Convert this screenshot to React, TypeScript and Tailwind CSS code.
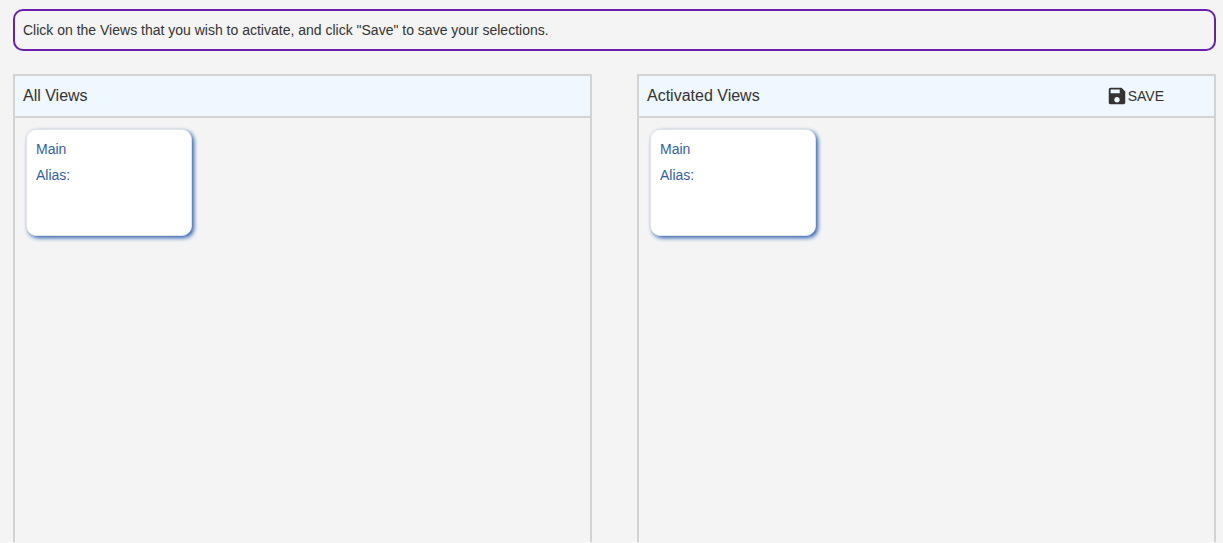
import type { ReactNode } from 'react';
import { MdSave } from 'react-icons/md';

type View = { name: string; alias: string };

const views: View[] = [{ name: 'Main', alias: '' }];

function ViewCard({ view }: { view: View }) {
  return (
    <button
      type="button"
      className="flex h-[107px] w-[166px] flex-col items-start rounded-[10px] border border-[#e0e4ea] bg-white px-[9px] pt-[6px] text-left text-[14px] leading-[26px] text-[#3560a0] shadow-[2px_2px_4px_#2f62b0]"
    >
      <span>{view.name}</span>
      <span>Alias: {view.alias}</span>
    </button>
  );
}

function Panel({ title, action }: { title: string; action?: ReactNode }) {
  return (
    <section className="flex flex-1 flex-col border-2 border-b-0 border-[#d3d3d3]">
      <header className="flex h-[42px] items-center justify-between border-b-2 border-[#d3d3d3] bg-[#f0f8ff] pr-[50px] pl-2">
        <h2 className="text-base">{title}</h2>
        {action}
      </header>
      <div className="flex flex-wrap gap-4 p-[11px]">
        {views.map((view) => (
          <ViewCard key={view.name} view={view} />
        ))}
      </div>
    </section>
  );
}

export default function App() {
  return (
    <main className="flex min-h-screen flex-col bg-[#f4f4f4] pt-[9px] pr-[7px] pb-px pl-[13px] font-['Liberation_Sans',Arial,sans-serif] text-[#333333]">
      <p className="rounded-[10px] border-2 border-[#6a1fb0] px-2 py-[9px] text-[14px] leading-5">
        Click on the Views that you wish to activate, and click "Save" to save your selections.
      </p>
      <div className="mt-[23px] flex flex-1 gap-[45px]">
        <Panel title="All Views" />
        <Panel
          title="Activated Views"
          action={
            <button type="button" className="flex items-center text-[14px]">
              <MdSave className="size-[22px]" aria-hidden="true" />
              SAVE
            </button>
          }
        />
      </div>
    </main>
  );
}
